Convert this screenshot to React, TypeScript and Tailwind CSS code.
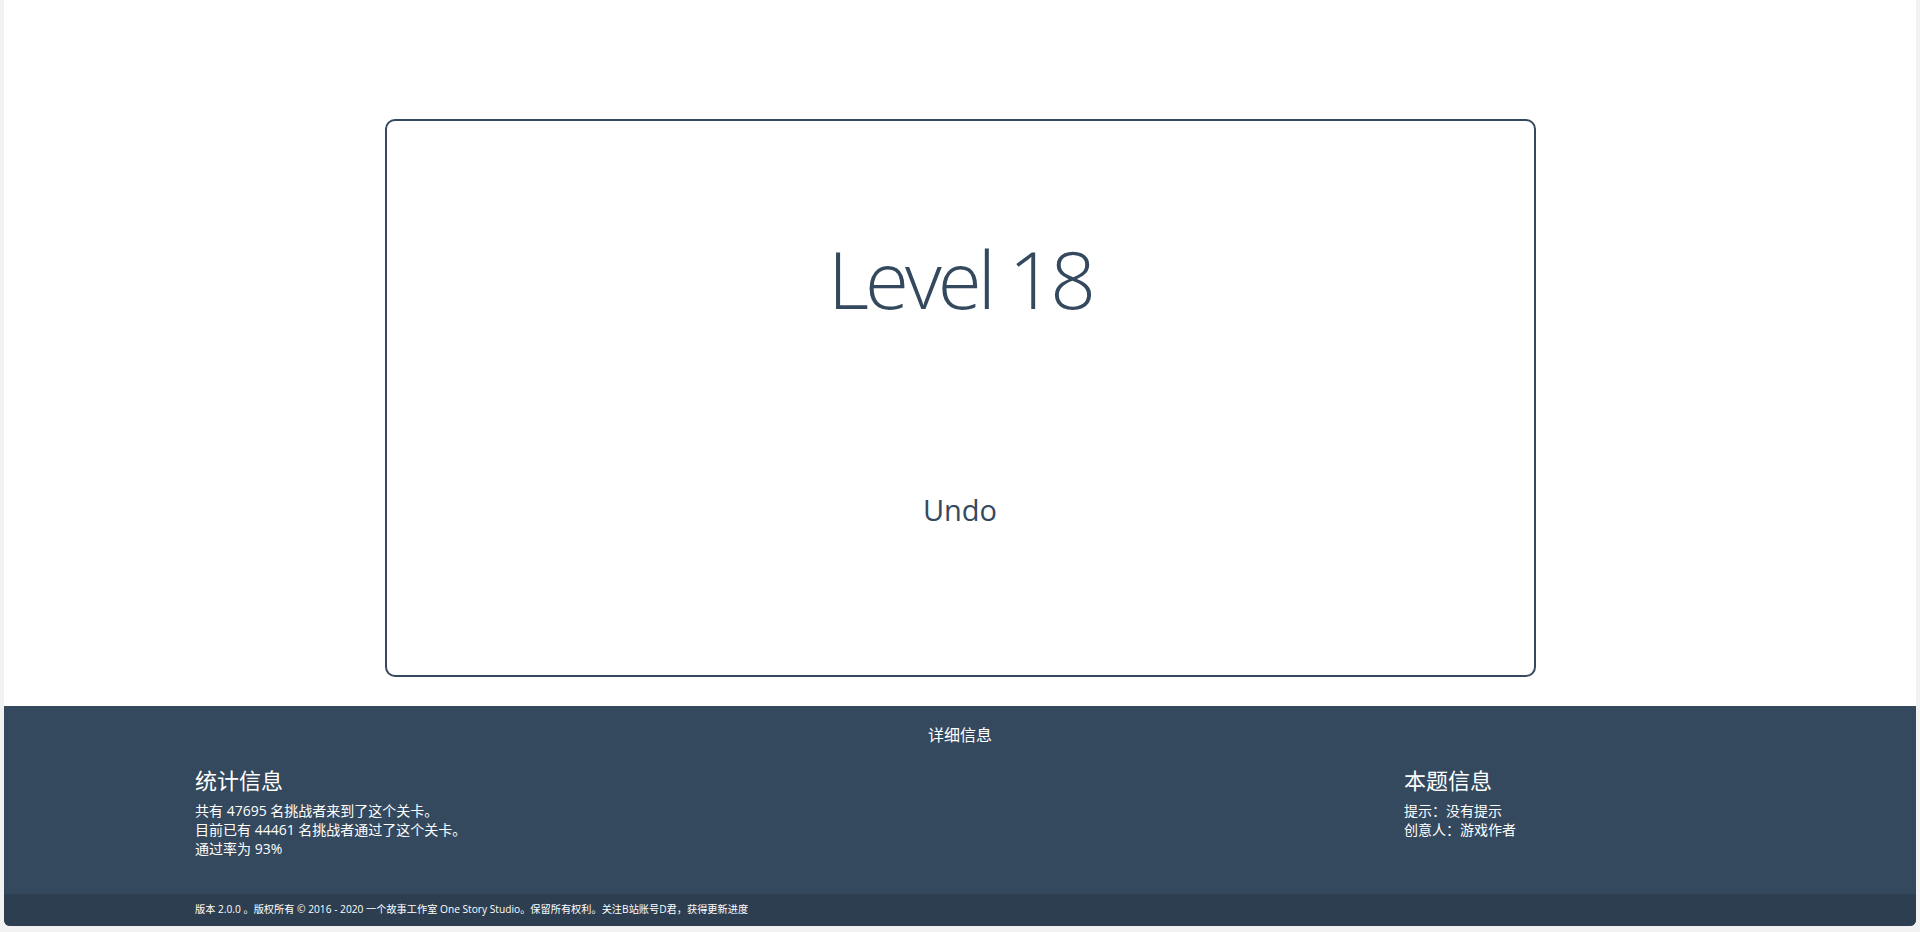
const stats = [
  "共有 47695 名挑战者来到了这个关卡。",
  "目前已有 44461 名挑战者通过了这个关卡。",
  "通过率为 93%",
];

const info = ["提示：没有提示", "创意人：游戏作者"];

export default function App() {
  return (
    <div
      className="h-screen bg-[#f2f2f2] px-1 pb-[6px] text-[#34495e]"
      style={{ fontFamily: '"Open Sans", "Noto Sans CJK SC", sans-serif' }}
    >
      <div className="flex h-full flex-col overflow-hidden rounded-b-[6px] bg-white">
        <main className="flex-1 pt-[119px]">
          <div className="mx-auto flex h-[558px] w-[1151px] flex-col items-center rounded-[10px] border-2 border-[#34495e]">
            <h1 className="mt-[109px] text-[80px] font-light leading-[96px] tracking-[-4px]">
              Level 18
            </h1>
            <button className="mt-[166px] text-[29px] leading-[35px] text-[#34495e]">
              Undo
            </button>
          </div>
        </main>

        <footer className="bg-[#34495e] text-white">
          <div className="h-[188px] pt-[17px]">
            <div className="text-center text-[16px] leading-[24px]">详细信息</div>
            <div className="mt-[20px] flex pl-[191px]">
              <div className="flex-1">
                <h3 className="text-[22px] leading-[27px]">统计信息</h3>
                <div className="mt-[7px] text-[14px] leading-[19px]">
                  {stats.map((s) => (
                    <div key={s}>{s}</div>
                  ))}
                </div>
              </div>
              <div className="w-[512px]">
                <h3 className="text-[22px] leading-[27px]">本题信息</h3>
                <div className="mt-[7px] text-[14px] leading-[19px]">
                  {info.map((s) => (
                    <div key={s}>{s}</div>
                  ))}
                </div>
              </div>
            </div>
          </div>
          <div className="flex h-[32px] items-center bg-[#2c3e50] pl-[191px] text-[10.2px]">
            版本 2.0.0 。版权所有 © 2016 - 2020 一个故事工作室 One Story Studio。保留所有权利。关注B站账号D君，获得更新进度
          </div>
        </footer>
      </div>
    </div>
  );
}
